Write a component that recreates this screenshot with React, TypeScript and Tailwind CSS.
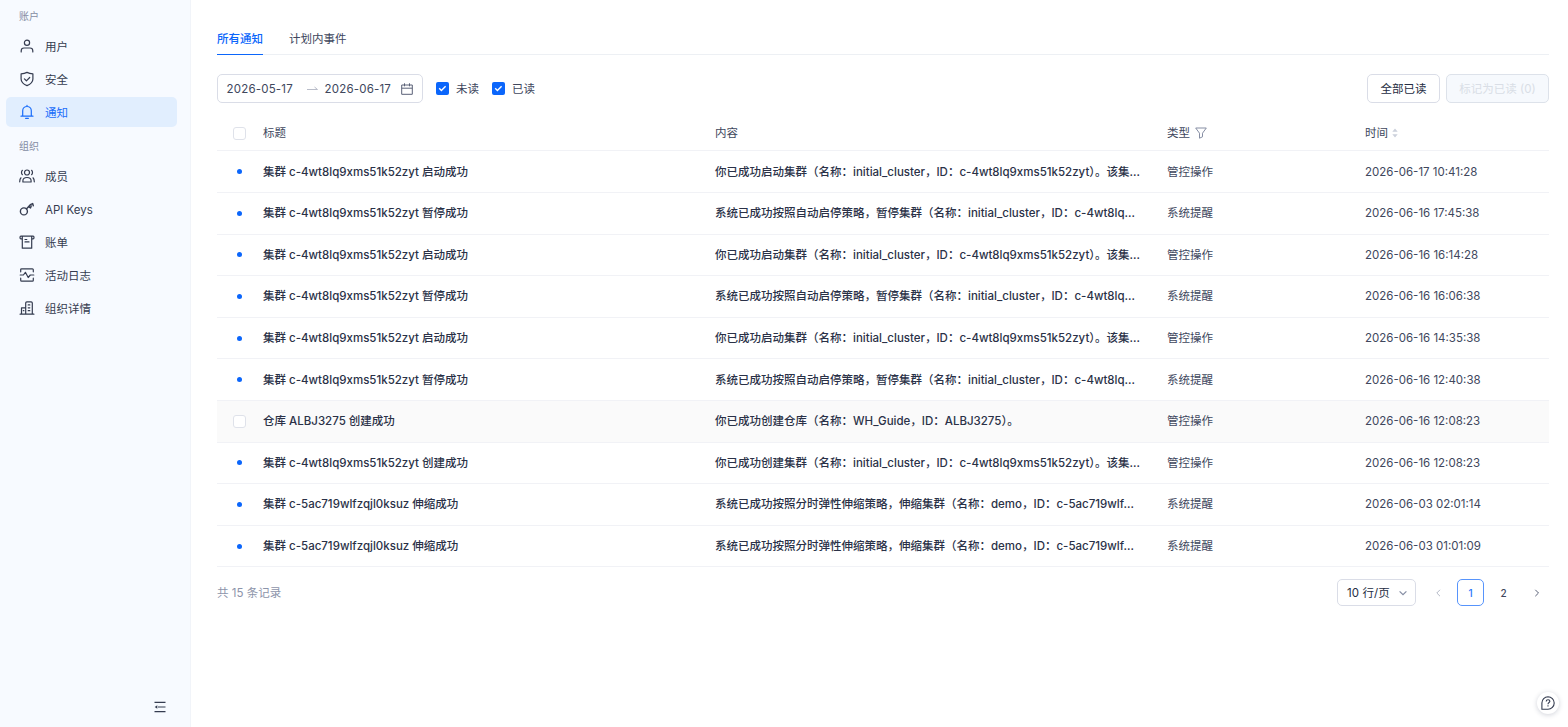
import type { ReactNode } from 'react'

interface IconProps {
  children: ReactNode
}

function Icon({ children }: IconProps) {
  return (
    <svg
      className="h-4 w-4 shrink-0"
      viewBox="0 0 16 16"
      fill="none"
      stroke="currentColor"
      strokeWidth="1.2"
      strokeLinecap="round"
      strokeLinejoin="round"
    >
      {children}
    </svg>
  )
}

const accountItems = [
  {
    label: '用户',
    icon: (
      <>
        <circle cx="8" cy="4.7" r="2.6" />
        <path d="M2.2 14v-1.2c0-1.700 1.100-2.800 2.800-2.800h6c1.700 0 2.800 1.100 2.800 2.800V14" />
      </>
    ),
  },
  {
    label: '安全',
    icon: (
      <>
        <path d="M8 1.400c1.800.9 3.800 1.300 5.900 1.400v5.100c0 3-2.100 5.100-5.900 6.700-3.800-1.600-5.900-3.700-5.900-6.700V2.800c2.100-.1 4.100-.5 5.900-1.400z" />
        <path d="m5.400 7.900 2 1.900 3.300-3.300" />
      </>
    ),
  },
  {
    label: '通知',
    active: true,
    icon: <path d="M8 1.300v1M3.700 12.100V6.800a4.300 4.300 0 0 1 8.600 0v5.300M2 12.200h12M6.600 14.300h2.800" />,
  },
]

const orgItems = [
  {
    label: '成员',
    icon: (
      <>
        <circle cx="8" cy="4.500" r="2.500" />
        <path d="M3.900 14v-1.300c0-2 1.300-3.200 4.100-3.200s4.100 1.200 4.100 3.200V14zM3.400 2.300c-1.200 1.100-1.200 3.300 0 4.400M12.600 2.300c1.200 1.100 1.200 3.300 0 4.400M2 9.800C1 10.700.7 12 .7 13.800M14 9.800c1 .9 1.300 2.200 1.300 4" />
      </>
    ),
  },
  {
    label: 'API Keys',
    icon: (
      <>
        <circle cx="4.900" cy="10.400" r="3.500" strokeWidth="1.400" />
        <path d="m7.400 7.900 3.900-4.200 2.400-1.100.6 2.200M9.700 5.600l1.800 1.300.7-1.900" strokeWidth="1.400" />
      </>
    ),
  },
  {
    label: '账单',
    icon: <path d="M3.300 4.800H1.900C.7 4.800.7 2.200 1.900 2.200h12.200c1.200 0 1.200 2.600 0 2.600h-1.400M3.300 2.300v11.900h9.400V2.300M6 5.500h1.800M6 7.900h4" />,
  },
  {
    label: '活动日志',
    icon: (
      <path d="M1.700 4.800V2.700c0-.6.300-.9.900-.9h10.800c.6 0 .9.300.9.900v2.100M1.700 11.200v2.100c0 .6.300.9.900.9h10.800c.6 0 .9-.3.900-.9v-2.100M1.200 8h3.200l2-2.700 2.800 5.200L11.300 8h3.500" />
    ),
  },
  {
    label: '组织详情',
    icon: (
      <path d="M1.100 14.200h13.800M2.500 14.200V7.800h4.200M6.700 14.200V3c0-.8.400-1.200 1.200-1.200h4.200c.8 0 1.200.4 1.200 1.200v11.200M9.200 4.900h1.600M9.200 7.800h1.600M9.200 10.700h1.600M4.300 10.700h.6" />
    ),
  },
]

const started = '你已成功启动集群（名称：initial_cluster，ID：c-4wt8lq9xms51k52zyt）。该集…'
const paused = '系统已成功按照自动启停策略，暂停集群（名称：initial_cluster，ID：c-4wt8lq…'
const scaled = '系统已成功按照分时弹性伸缩策略，伸缩集群（名称：demo，ID：c-5ac719wlf…'

const rows = [
  { title: '集群 c-4wt8lq9xms51k52zyt 启动成功', content: started, type: '管控操作', time: '2026-06-17 10:41:28' },
  { title: '集群 c-4wt8lq9xms51k52zyt 暂停成功', content: paused, type: '系统提醒', time: '2026-06-16 17:45:38' },
  { title: '集群 c-4wt8lq9xms51k52zyt 启动成功', content: started, type: '管控操作', time: '2026-06-16 16:14:28' },
  { title: '集群 c-4wt8lq9xms51k52zyt 暂停成功', content: paused, type: '系统提醒', time: '2026-06-16 16:06:38' },
  { title: '集群 c-4wt8lq9xms51k52zyt 启动成功', content: started, type: '管控操作', time: '2026-06-16 14:35:38' },
  { title: '集群 c-4wt8lq9xms51k52zyt 暂停成功', content: paused, type: '系统提醒', time: '2026-06-16 12:40:38' },
  { title: '仓库 ALBJ3275 创建成功', content: '你已成功创建仓库（名称：WH_Guide，ID：ALBJ3275）。', type: '管控操作', time: '2026-06-16 12:08:23', hovered: true },
  { title: '集群 c-4wt8lq9xms51k52zyt 创建成功', content: '你已成功创建集群（名称：initial_cluster，ID：c-4wt8lq9xms51k52zyt）。该集…', type: '管控操作', time: '2026-06-16 12:08:23' },
  { title: '集群 c-5ac719wlfzqjl0ksuz 伸缩成功', content: scaled, type: '系统提醒', time: '2026-06-03 02:01:14' },
  { title: '集群 c-5ac719wlfzqjl0ksuz 伸缩成功', content: scaled, type: '系统提醒', time: '2026-06-03 01:01:09' },
]

function NavItem({ label, icon, active }: { label: string; icon: ReactNode; active?: boolean }) {
  return (
    <a
      className={`flex h-[30px] items-center gap-2.5 rounded-[5px] pl-[13px] ${
        active ? 'bg-[#e1eefe] text-[#1a6dfa]' : 'text-[#353c50]'
      }`}
    >
      <Icon>{icon}</Icon>
      <span className="pt-px">{label}</span>
    </a>
  )
}

function Sidebar() {
  return (
    <aside className="flex w-[191px] shrink-0 flex-col border-r border-[#f1f4f9] bg-[#f7faff] pr-[13px] pl-1.5">
      <div className="mt-2 pl-[13px] text-[10px] leading-4 text-[#858ca3]">账户</div>
      <nav className="mt-[7px] flex flex-col gap-[3px]">
        {accountItems.map((item) => (
          <NavItem key={item.label} {...item} />
        ))}
      </nav>
      <div className="mt-[11px] pl-[13px] text-[10px] leading-4 text-[#858ca3]">组织</div>
      <nav className="mt-[7px] flex flex-col gap-[3px]">
        {orgItems.map((item) => (
          <NavItem key={item.label} {...item} />
        ))}
      </nav>
      <svg
        className="mt-auto mr-[9px] mb-3 h-4 w-4 self-end text-[#353c50]"
        viewBox="0 0 16 16"
        fill="none"
        stroke="currentColor"
        strokeWidth="1.2"
      >
        <path d="M2.500 3.300h11M6 8h7.500M2.500 12.700h11" />
        <path d="M5.300 6.300v3.400L2.700 8z" fill="currentColor" stroke="none" />
      </svg>
    </aside>
  )
}

function Checkbox({ checked }: { checked?: boolean }) {
  if (!checked) {
    return <span className="block h-[13px] w-[13px] rounded-[3px] border border-[#dfe2ea] bg-white" />
  }
  return (
    <span className="flex h-[13px] w-[13px] items-center justify-center rounded-[2px] bg-[#0b66fb]">
      <svg className="h-[9px] w-[9px]" viewBox="0 0 9 9" fill="none" stroke="white" strokeWidth="1.4">
        <path d="m1.200 4.300 2.200 2.200 4.200-4.200" />
      </svg>
    </span>
  )
}

function Toolbar() {
  return (
    <div className="mt-[19px] flex h-[29px] items-center">
      <div className="flex h-[29px] w-[206px] items-center rounded-[5px] border border-[#dadde7] pl-[8.500px]">
        <span className="w-[80px] tracking-[0.200px]">2026-05-17</span>
        <svg className="h-2.5 w-[11px]" viewBox="0 0 11 10" fill="none" stroke="#b9bdc9">
          <path d="M0 5.500h10.500L7.500 3" />
        </svg>
        <span className="ml-[7px] w-[76px] tracking-[0.200px]">2026-06-17</span>
        <svg className="h-3 w-3" viewBox="0 0 12 12" fill="none" stroke="#5a6177">
          <path d="M.7 2h10.600v9.300H.7zM.7 5.200h10.600M3.500.3v3M8.500.3v3" />
        </svg>
      </div>
      <div className="ml-[13px] flex items-center gap-[7px]">
        <Checkbox checked />
        <span>未读</span>
      </div>
      <div className="ml-[13px] flex items-center gap-[7px]">
        <Checkbox checked />
        <span>已读</span>
      </div>
      <button className="ml-auto h-[29px] w-[73px] rounded-[5px] border border-[#dadde7] bg-white text-[#252c42]">
        全部已读
      </button>
      <button className="ml-1.5 h-[29px] w-[103px] rounded-[5px] border border-[#dde2ea] bg-[#f6f9fd] text-[#d9dee6]" disabled>
        标记为已读 (0)
      </button>
    </div>
  )
}

function NotificationTable() {
  return (
    <div className="mt-[13px]">
      <div className="grid h-[35.300px] grid-cols-[46px_452px_452px_198px_1fr] items-center border-b border-[#f1f2f6]">
        <div className="pl-4">
          <Checkbox />
        </div>
        <div>标题</div>
        <div>内容</div>
        <div className="flex items-center gap-[5px]">
          类型
          <svg className="h-3 w-3" viewBox="0 0 12 12" fill="none" stroke="#858da3" strokeLinejoin="round">
            <path d="M.7 1h10.600L7.500 6.200v3.600l-3 1.400v-5z" />
          </svg>
        </div>
        <div className="flex items-center gap-1">
          时间
          <svg className="h-2.5 w-1.5" viewBox="0 0 6 10" fill="#ccd1dc">
            <path d="M3 .5 5.700 3.700H.3zM3 9.500.3 6.300h5.400z" />
          </svg>
        </div>
      </div>
      {rows.map((row, i) => (
        <div
          key={i}
          className={`grid h-[41.620px] grid-cols-[46px_452px_452px_198px_1fr] items-center border-b border-[#f1f2f6] ${
            row.hovered ? 'bg-[#fafafa]' : ''
          }`}
        >
          <div className="pl-4">
            {row.hovered ? <Checkbox /> : <span className="ml-1 block h-[5px] w-[5px] rounded-full bg-[#0b66fb]" />}
          </div>
          <div className="font-medium text-[#2a3147]">{row.title}</div>
          <div className="w-[430px] font-medium whitespace-nowrap text-[#2a3147]">{row.content}</div>
          <div>{row.type}</div>
          <div>{row.time}</div>
        </div>
      ))}
    </div>
  )
}

function Pagination() {
  return (
    <div className="mt-3 flex h-[27px] items-center">
      <span className="text-[#8d94aa]">共 15 条记录</span>
      <div className="ml-auto flex h-[27px] w-[79px] items-center justify-between rounded-[5px] border border-[#dadde7] pr-2 pl-[9px] text-[#252c42]">
        <span className="tracking-[0.100px]">10 行/页</span>
        <svg className="h-2 w-2" viewBox="0 0 8 8" fill="none" stroke="#858da3" strokeWidth="1.200">
          <path d="m.6 2.300 3.400 3.400 3.400-3.400" />
        </svg>
      </div>
      <div className="-mr-px ml-2 flex items-center gap-1.5 text-[10px] font-medium">
        <span className="flex h-[27px] w-[27px] items-center justify-center">
          <svg className="h-2 w-2" viewBox="0 0 8 8" fill="none" stroke="#b5bac7">
            <path d="M6 .8 2.800 4 6 7.200" />
          </svg>
        </span>
        <span className="flex h-[27px] w-[27px] items-center justify-center rounded-[5px] border border-[#5794fc] text-[#2874fb]">1</span>
        <span className="flex h-[27px] w-[27px] items-center justify-center">2</span>
        <span className="flex h-[27px] w-[27px] items-center justify-center">
          <svg className="h-2 w-2" viewBox="0 0 8 8" fill="none" stroke="#596077">
            <path d="M2.300.8 5.500 4 2.300 7.200" />
          </svg>
        </span>
      </div>
    </div>
  )
}

export default function App() {
  return (
    <div className="flex h-screen overflow-hidden bg-white font-[Inter,'Noto_Sans_CJK_SC',sans-serif] text-[11.500px] leading-4 text-[#40475d]">
      <Sidebar />
      <main className="flex min-w-0 flex-1 flex-col pt-[31px] pr-[19px] pl-[26px]">
        <div className="flex h-6 shrink-0 gap-[26px] border-b border-[#edf0f4]">
          <div className="h-6 border-b border-[#0b66fb] font-medium text-[#0b66fb]">所有通知</div>
          <div>计划内事件</div>
        </div>
        <Toolbar />
        <NotificationTable />
        <Pagination />
      </main>
      <button className="fixed right-[9px] bottom-[13px] flex h-[22px] w-[22px] items-center justify-center rounded-full bg-white text-[#353c50] shadow-[0_1px_5px_rgba(40,50,80,0.22)]">
        <svg className="h-3.5 w-3.5" viewBox="0 0 14 14" fill="none" stroke="currentColor" strokeWidth="1.100">
          <path d="M7 .8a6.200 6.200 0 1 1 0 12.400H.9V7A6.200 6.200 0 0 1 7 .8z" />
          <path d="M5.200 5.500c0-2.500 3.700-2.300 3.700-.2C8.900 6.600 7 6.500 7 8.200M7 9.300v1.200" />
        </svg>
      </button>
    </div>
  )
}
